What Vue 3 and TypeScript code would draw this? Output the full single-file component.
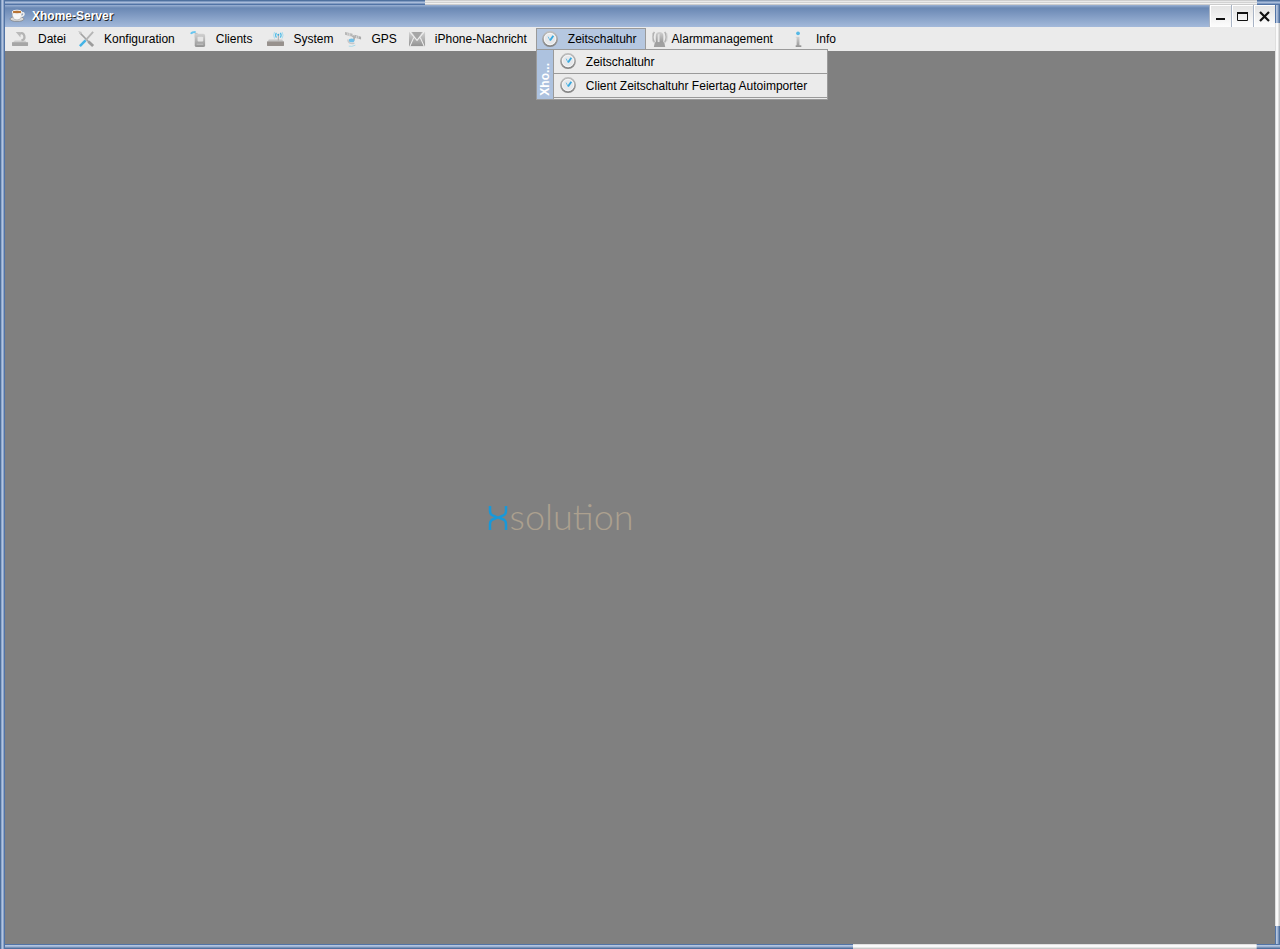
<script setup lang="ts">
import { ref } from 'vue'

interface MenuEntry {
  label: string
  icon: string
  children?: string[]
}

const menus: MenuEntry[] = [
  { label: 'Datei', icon: 'file' },
  { label: 'Konfiguration', icon: 'tools' },
  { label: 'Clients', icon: 'client' },
  { label: 'System', icon: 'router' },
  { label: 'GPS', icon: 'gps' },
  { label: 'iPhone-Nachricht', icon: 'mail' },
  {
    label: 'Zeitschaltuhr',
    icon: 'clock',
    children: ['Zeitschaltuhr', 'Client Zeitschaltuhr Feiertag Autoimporter'],
  },
  { label: 'Alarmmanagement', icon: 'alarm' },
  { label: 'Info', icon: 'info' },
]

const openMenu = ref('Zeitschaltuhr')

function toggle(label: string) {
  openMenu.value = openMenu.value === label ? '' : label
}
</script>

<template>
  <svg class="defs" aria-hidden="true">
    <defs>
      <linearGradient id="metal" x1="0" y1="0" x2="0" y2="1">
        <stop offset="0" stop-color="#d2d2d2" />
        <stop offset="1" stop-color="#939393" />
      </linearGradient>
      <linearGradient id="ring" x1="0" y1="0" x2="0" y2="1">
        <stop offset="0" stop-color="#bdbdbd" />
        <stop offset="1" stop-color="#858585" />
      </linearGradient>
      <symbol id="file" viewBox="0 0 18 18">
        <path d="M3 10h11l2 3H0z" fill="#cfcfcf" />
        <path d="M0 12h17v3q0 1-1 1H1q-1 0-1-1z" fill="#a6a6a6" />
        <path d="M10 10q4-1 3-5t-5-2" fill="none" stroke="#b3b3b3" stroke-width="2.400" />
        <path d="M4 1h5v6z" fill="#bababa" />
      </symbol>
      <symbol id="tools" viewBox="0 0 18 18">
        <path d="M2 2l13 13" stroke="#a2a2a2" stroke-width="1.600" />
        <path d="M0 0l4 1-1 3z" fill="#c4c4c4" />
        <path d="M11 11l5 5" stroke="#9c9c9c" stroke-width="3" />
        <path d="M16 1L8 10" stroke="#b5b5b5" stroke-width="2" />
        <path d="M8 10l-6 6" stroke="#43b3e6" stroke-width="2.600" />
      </symbol>
      <symbol id="client" viewBox="0 0 18 18">
        <path d="M1 3q1-2 5-2" fill="none" stroke="#67c5ef" stroke-width="2" />
        <path d="M5 2h3v5H5z" fill="#c2c2c2" />
        <rect x="5" y="3" width="11" height="14" rx="2" fill="url(#metal)" />
        <rect x="8" y="6" width="6" height="5" rx="1" fill="#e5e5e5" />
        <path d="M7 14h7" stroke="#c5c5c5" />
      </symbol>
      <symbol id="router" viewBox="0 0 18 18">
        <path d="M2 9h14l2 3H0z" fill="#c6c6c6" />
        <path d="M0 11h18v4q0 1-1 1H1q-1 0-1-1z" fill="#97918d" />
        <path d="M12 4v6" stroke="#a6a6a6" />
        <path d="M10 2q-2 2.500 0 5M14 2q2 2.500 0 5" fill="none" stroke="#56bee8" stroke-width="1.300" />
        <path d="M8 1q-2 3.500 0 7M16 1q2 3.500 0 7" fill="none" stroke="#a4dbee" />
        <circle cx="12" cy="4" r="1" fill="#3aaede" />
      </symbol>
      <symbol id="gps" viewBox="0 0 18 18">
        <path d="M0 1l8 2v3L0 4z" fill="#b6b6b6" />
        <path d="M10 4l7 2v3l-7-2z" fill="#ababab" />
        <path d="M3 2v3M5 2v4M12 5v3M14 5v3" stroke="#ddd" />
        <path d="M8 5l2 2-1 3" fill="none" stroke="#b0b0b0" stroke-width="2" />
        <ellipse cx="7" cy="10" rx="3" ry="2" fill="#70bfe8" />
        <path d="M3 9q0 5 7 4" fill="none" stroke="#c8c8c8" stroke-width="1.500" />
        <path d="M4 16q3 1 7-1" fill="none" stroke="#a6d9e8" />
      </symbol>
      <symbol id="mail" viewBox="0 0 18 18">
        <rect x="0" y="1" width="17" height="15" fill="url(#metal)" />
        <path d="M3 1h11L8.500 9z" fill="#a6a6a6" />
        <path d="M1 1l7.500 9L16 1M1 16l4-9M16 16l-4-9" fill="none" stroke="#eee" stroke-width="1.200" />
      </symbol>
      <symbol id="clock" viewBox="0 0 18 18">
        <circle cx="8.500" cy="8.500" r="7.500" fill="#e6e8eb" stroke="url(#ring)" stroke-width="1.800" />
        <circle cx="8.500" cy="8.500" r="6" fill="none" stroke="#f5f5f5" />
        <path d="M8.500 10L12 5" stroke="#38a9df" stroke-width="2" />
        <path d="M8.500 10l-2-4" stroke="#62bbe4" />
      </symbol>
      <symbol id="alarm" viewBox="0 0 18 18">
        <path d="M4 13V5q0-4 4-4t4 4v8z" fill="url(#metal)" />
        <path d="M6 12V5q0-2 2-2v9z" fill="#e1e1e1" />
        <path d="M3 12h10l1 5H2z" fill="#a0a0a0" />
        <path d="M2.500 1q-3 5 0 11M13.500 1q3 5 0 11" fill="none" stroke="#b1b1b1" stroke-width="1.500" />
        <path d="M.5 2q-1 4 0 9M15.500 2q1 4 0 9" fill="none" stroke="#c9c9c9" />
      </symbol>
      <symbol id="info" viewBox="0 0 18 18">
        <circle cx="8.500" cy="2.500" r="2" fill="#55b8e5" />
        <path d="M6 6h4v9h2v2H6v-2h1V7H6z" fill="url(#metal)" />
      </symbol>
    </defs>
  </svg>

  <div class="window">
    <header class="titlebar">
      <svg class="cup" viewBox="0 0 18 16" aria-hidden="true">
        <ellipse cx="8" cy="11" rx="7" ry="2.500" fill="#d9d9d9" stroke="#777" stroke-width=".6" />
        <path d="M3 4q0 8 5 8t5-8z" fill="#f7f7f7" stroke="#999" stroke-width=".6" />
        <path d="M12 5q3-1 3 1t-4 3" fill="none" stroke="#eee" stroke-width="1.500" />
        <ellipse cx="8" cy="4" rx="5" ry="1.800" fill="#b87333" stroke="#eee" />
      </svg>
      <h1>Xhome-Server</h1>
      <div class="controls">
        <button type="button" aria-label="Minimieren">
          <svg viewBox="0 0 20 21"><path d="M5 13h9" stroke="#111" stroke-width="2" /></svg>
        </button>
        <button type="button" aria-label="Maximieren">
          <svg viewBox="0 0 20 21"><path d="M4.500 7v7.500h10V7" fill="none" stroke="#111" /><path d="M4 7h11" stroke="#111" stroke-width="2" /></svg>
        </button>
        <button type="button" aria-label="Schließen">
          <svg viewBox="0 0 20 21"><path d="M5 6l9 9M14 6l-9 9" stroke="#111" stroke-width="2.200" /></svg>
        </button>
      </div>
    </header>

    <nav class="menubar">
      <div v-for="menu in menus" :key="menu.label" class="entry">
        <button
          type="button"
          class="menu"
          :class="[menu.icon, { open: openMenu === menu.label }]"
          @click="toggle(menu.label)"
        >
          <svg class="icon" aria-hidden="true"><use :href="'#' + menu.icon" /></svg>
          <span>{{ menu.label }}</span>
        </button>
        <div v-if="menu.children && openMenu === menu.label" class="popup">
          <div class="side"><span>Xho...</span></div>
          <div class="options">
            <button v-for="child in menu.children" :key="child" type="button" class="option">
              <svg class="icon" aria-hidden="true"><use href="#clock" /></svg>
              <span>{{ child }}</span>
            </button>
          </div>
        </div>
      </div>
    </nav>

    <main class="desktop">
      <div class="logo">
        <svg class="mark" viewBox="0 0 20 26" aria-hidden="true">
          <path d="M2 2v5q0 4 4 5l3 1.500L6 15q-4 1-4 5v6M18 2v5q0 4-4 5l-3 1.500 3 1.500q4 1 4 5v6M6 13.500h8" fill="none" stroke="#1998d8" stroke-width="2.500" />
        </svg>
        <span>solution</span>
      </div>
    </main>
  </div>
</template>

<style>
body {
  margin: 0;
}
</style>

<style scoped>
.defs {
  position: absolute;
  width: 0;
  height: 0;
}

.window {
  box-sizing: border-box;
  min-height: 100vh;
  padding: 5px;
  display: flex;
  flex-direction: column;
  font: 12px/14px "Liberation Sans", Arial, sans-serif;
  color: #000;
  background-color: #4f719f;
  background-image:
    linear-gradient(to right, #4f719f 1px, #8fa7cb 1px 2px, #b4c5df 2px 3px, #89a2c8 3px 4px, #5274a6 4px),
    linear-gradient(to bottom, #cfcfcf 1px, #e9e9e9 1px 2px, #d2d2d2 2px 3px, #f1f1f1 3px 4px, #cccccc 4px),
    linear-gradient(to bottom, #e1e1e1 1px, #fafafa 1px 3px, #e6e6e6 3px 4px, #c9c9c9 4px),
    linear-gradient(to right, #dedede 1px, #fafafa 1px 3px, #e1e1e1 3px 4px, #c9c9c9 4px),
    linear-gradient(to bottom, #4f719f 1px, #7f9ac1 1px 2px, #a9bcda 2px 3px, #819bc2 3px 4px, #5274a6 4px),
    linear-gradient(to bottom, #5274a6 1px, #b4c5df 1px 2px, #9eb3d3 2px 3px, #7891b8 3px 4px, #4f719f 4px),
    linear-gradient(to right, #5274a6 1px, #b4c5df 1px 2px, #9eb3d3 2px 3px, #7891b8 3px 4px, #4f719f 4px);
  background-repeat: no-repeat;
  background-size:
    5px 100%,
    65% 5px,
    calc(33.333% - 23px) 5px,
    5px calc(100% - 46px),
    100% 5px,
    100% 5px,
    5px 100%;
  background-position:
    left top,
    right 23px top,
    right 23px bottom,
    right top 23px,
    left top,
    left bottom,
    right top;
}

.titlebar {
  display: flex;
  align-items: center;
  height: 22px;
  padding-left: 4px;
  background: linear-gradient(#9ab1d3 0, #6a88b4 3px, #a3b9da 100%);
}

.cup {
  width: 18px;
  height: 16px;
  margin-right: 5px;
}

h1 {
  flex: 1;
  margin: 0;
  font-size: 12px;
  line-height: 16px;
  color: #fff;
  text-shadow: 1px 1px 0 #222;
}

.controls {
  display: flex;
  gap: 1px;
  height: 22px;
  background: #a9b4c5;
  padding-left: 1px;
}

.controls button {
  width: 21px;
  padding: 0;
  border: 1px solid #fff;
  border-width: 1px 0 0 1px;
  background: linear-gradient(#e4e4e4, #fdfdfd);
}

.controls svg {
  display: block;
  width: 20px;
  height: 21px;
}

.menubar {
  display: flex;
  height: 24px;
  box-sizing: border-box;
  padding: 1px 0 1px 1px;
  background: #ebebeb;
}

.entry {
  position: relative;
}

.menu {
  display: flex;
  align-items: center;
  gap: 9px;
  height: 22px;
  padding: 0 5px;
  border: 1px solid transparent;
  background: none;
  font: inherit;
  color: inherit;
  white-space: nowrap;
}

.menu.open {
  border-color: #9a9a9a;
  background: #b5c7e0;
}

.menu.tools,
.menu.client,
.menu.mail,
.menu.clock {
  padding-right: 8px;
}

.menu.alarm {
  gap: 3px;
  padding-right: 10px;
}

.icon {
  flex: none;
  width: 17px;
  height: 17px;
}

.popup {
  position: absolute;
  top: 21px;
  left: 0;
  z-index: 2;
  display: flex;
  border: 1px solid #9a9a9a;
  background: #ebebeb;
}

.side {
  display: flex;
  align-items: flex-end;
  width: 16px;
  background: #adc2df;
}

.side span {
  writing-mode: vertical-rl;
  transform: rotate(180deg);
  font-weight: bold;
  color: #fff;
  line-height: 16px;
  padding-top: 3px;
}

.options {
  border-left: 1px solid #9a9a9a;
  padding-bottom: 1px;
}

.option {
  display: flex;
  align-items: center;
  gap: 9px;
  width: 100%;
  height: 24px;
  padding: 0 20px 0 6px;
  border: 0;
  border-bottom: 1px solid #9a9a9a;
  background: #ebebeb;
  font: inherit;
  color: inherit;
  white-space: nowrap;
}

.desktop {
  flex: 1;
  display: grid;
  grid-template-columns: 38% 1fr;
  align-items: center;
  padding-top: 36px;
  background: #808080;
}

.logo {
  grid-column: 2;
  display: flex;
  align-items: baseline;
  gap: 2px;
  color: #aca08f;
  font: 300 36px/36px Lato, "Open Sans", sans-serif;
}

.mark {
  width: 20px;
  height: 26px;
}
</style>
